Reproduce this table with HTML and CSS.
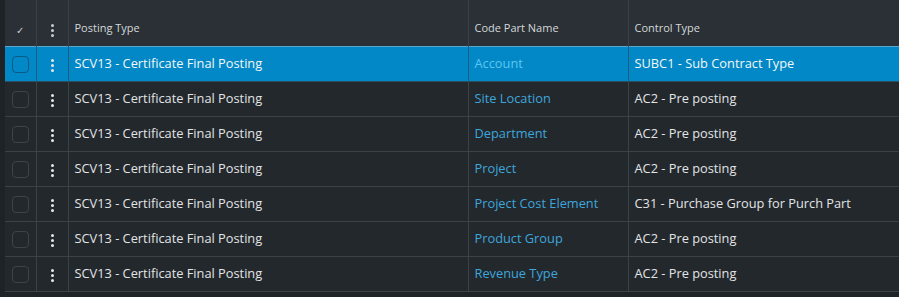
FILE: index.html
```html
<!DOCTYPE html>
<html lang="en">
<head>
    <meta charset="UTF-8">
    <title>Posting Control</title>
    <link rel="stylesheet" href="styles.css">
</head>
<body>
    <div class="grid-wrap">
        <table class="grid">
            <colgroup>
                <col class="col-check">
                <col class="col-menu">
                <col class="col-type">
                <col class="col-code">
                <col class="col-control">
            </colgroup>
            <thead>
                <tr>
                    <th class="cell-center"><span class="check-mark">&#10003;</span></th>
                    <th class="cell-center"><span class="dots"><i></i><i></i><i></i></span></th>
                    <th>Posting Type</th>
                    <th>Code Part Name</th>
                    <th>Control Type</th>
                </tr>
            </thead>
            <tbody>
                <tr class="selected">
                    <td class="cell-center"><span class="checkbox"></span></td>
                    <td class="cell-center"><span class="dots"><i></i><i></i><i></i></span></td>
                    <td>SCV13 - Certificate Final Posting</td>
                    <td><a href="#">Account</a></td>
                    <td>SUBC1 - Sub Contract Type</td>
                </tr>
                <tr>
                    <td class="cell-center"><span class="checkbox"></span></td>
                    <td class="cell-center"><span class="dots"><i></i><i></i><i></i></span></td>
                    <td>SCV13 - Certificate Final Posting</td>
                    <td><a href="#">Site Location</a></td>
                    <td>AC2 - Pre posting</td>
                </tr>
                <tr>
                    <td class="cell-center"><span class="checkbox"></span></td>
                    <td class="cell-center"><span class="dots"><i></i><i></i><i></i></span></td>
                    <td>SCV13 - Certificate Final Posting</td>
                    <td><a href="#">Department</a></td>
                    <td>AC2 - Pre posting</td>
                </tr>
                <tr>
                    <td class="cell-center"><span class="checkbox"></span></td>
                    <td class="cell-center"><span class="dots"><i></i><i></i><i></i></span></td>
                    <td>SCV13 - Certificate Final Posting</td>
                    <td><a href="#">Project</a></td>
                    <td>AC2 - Pre posting</td>
                </tr>
                <tr>
                    <td class="cell-center"><span class="checkbox"></span></td>
                    <td class="cell-center"><span class="dots"><i></i><i></i><i></i></span></td>
                    <td>SCV13 - Certificate Final Posting</td>
                    <td><a href="#">Project Cost Element</a></td>
                    <td>C31 - Purchase Group for Purch Part</td>
                </tr>
                <tr>
                    <td class="cell-center"><span class="checkbox"></span></td>
                    <td class="cell-center"><span class="dots"><i></i><i></i><i></i></span></td>
                    <td>SCV13 - Certificate Final Posting</td>
                    <td><a href="#">Product Group</a></td>
                    <td>AC2 - Pre posting</td>
                </tr>
                <tr>
                    <td class="cell-center"><span class="checkbox"></span></td>
                    <td class="cell-center"><span class="dots"><i></i><i></i><i></i></span></td>
                    <td>SCV13 - Certificate Final Posting</td>
                    <td><a href="#">Revenue Type</a></td>
                    <td>AC2 - Pre posting</td>
                </tr>
            </tbody>
        </table>
    </div>
</body>
</html>
```

FILE: styles.css
```css
* {
    margin: 0;
    padding: 0;
    box-sizing: border-box;
}

body {
    font-family: 'Open Sans', 'Liberation Sans', sans-serif;
    background-color: #2a3035;
    color: #e2e4e6;
    width: 899px;
    height: 297px;
    overflow: hidden;
}

.grid-wrap {
    padding-left: 5px;
    background-color: #1e2327;
    height: 297px;
}

.grid {
    width: 894px;
    table-layout: fixed;
    border-collapse: collapse;
    background-color: #23282d;
}

.col-check { width: 31px; }
.col-menu { width: 32px; }
.col-type { width: 400px; }
.col-code { width: 160px; }
.col-control { width: 271px; }

.grid th {
    height: 46px;
    background-color: #2a3035;
    color: #d5d8da;
    font-size: 11px;
    font-weight: 400;
    text-align: left;
    vertical-align: bottom;
    padding: 0 6px 11px;
    border-left: 1px solid #3b4247;
}

.grid th:first-child,
.grid td:first-child {
    border-left: none;
}

.grid td {
    height: 35px;
    font-size: 12.8px;
    padding: 0 6px 2px;
    border-left: 1px solid #3b4247;
    border-bottom: 1px solid #3b4247;
    white-space: nowrap;
    overflow: hidden;
}

.grid .cell-center {
    text-align: center;
    padding: 0;
}

.grid th.cell-center {
    padding-bottom: 9px;
}

.grid a {
    color: #3ea6dc;
    text-decoration: none;
}

.grid tr.selected td {
    background-color: #0288c6;
    color: #f2f6f8;
    border-top: 1px solid #5aa9cd;
    border-bottom: 1px solid #2a4f62;
}

.grid tr.selected td + td {
    border-left-color: #1d5f80;
}

.grid tr.selected a {
    color: #5cc6f2;
}

.check-mark {
    font-size: 10px;
    color: #c9cdd0;
}

.checkbox {
    display: inline-block;
    width: 17px;
    height: 17px;
    border: 1px solid #3d4449;
    border-radius: 4px;
    vertical-align: middle;
}

.selected .checkbox {
    border-color: #0d5a80;
}

.dots {
    display: inline-flex;
    flex-direction: column;
    gap: 2px;
    vertical-align: middle;
}

.dots i {
    display: block;
    width: 3px;
    height: 3px;
    border-radius: 50%;
    background-color: #e6e8ea;
}

th .dots i {
    background-color: #c9cdd0;
}
```
